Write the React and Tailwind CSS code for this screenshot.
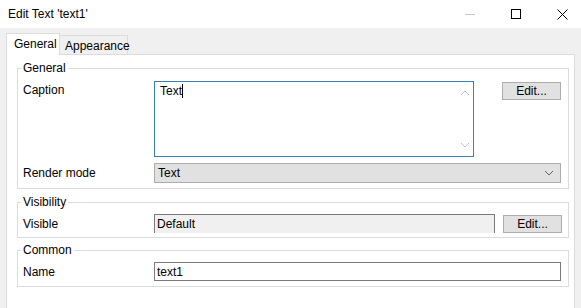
import React from 'react'

function Chevron({ dir = 'down', className = '' }) {
  const d = dir === 'up' ? 'M1 5 L5 1 L9 5' : 'M1 1 L5 5 L9 1'
  return (
    <svg width="10" height="6" viewBox="0 0 10 6" className={className}>
      <path d={d} fill="none" stroke="currentColor" strokeWidth="1" />
    </svg>
  )
}

function EditButton() {
  return (
    <button className="w-[59px] h-[18px] bg-[#e1e1e1] border border-[#adadad] text-[12px] leading-none flex items-center justify-center">
      Edit...
    </button>
  )
}

function Group({ title, children, className = '' }) {
  return (
    <fieldset className={`w-[552px] ml-[10px] border border-[#dcdcdc] pl-[5px] pr-[6px] ${className}`}>
      <legend className="px-[2px] -ml-[2px] leading-[14px]">{title}</legend>
      {children}
    </fieldset>
  )
}

export default function App() {
  return (
    <div
      className="w-[581px] h-[308px] bg-[#f0f0f0] overflow-hidden flex flex-col text-[12px] text-black"
      style={{ fontFamily: '"Liberation Sans", Arial, sans-serif' }}
    >
      {/* title bar */}
      <div className="h-[28px] bg-white flex items-center shrink-0">
        <span className="pl-[8px] leading-none">Edit Text 'text1'</span>
        <div className="ml-auto -mr-[4px] flex h-full">
          <div className="w-[46px] flex items-center justify-center">
            <div className="w-[10px] h-px bg-[#c8c8c8]" />
          </div>
          <div className="w-[46px] flex items-center justify-center">
            <div className="w-[10px] h-[10px] border border-black" />
          </div>
          <div className="w-[46px] flex items-center justify-center">
            <svg width="11" height="11" viewBox="0 0 11 11">
              <path d="M0.5 0.5 L10.5 10.5 M10.5 0.5 L0.5 10.5" stroke="black" strokeWidth="1" />
            </svg>
          </div>
        </div>
      </div>

      {/* tabs */}
      <div className="h-[26px] flex items-end pl-[6px] shrink-0">
        <div className="relative z-10 -mb-px h-[22px] w-[54px] bg-white border border-b-0 border-[#dcdcdc] pl-[7px] pt-[3px] leading-[14px]">
          General
        </div>
        <div className="h-[19px] w-[68px] bg-[#f0f0f0] border border-l-0 border-b-0 border-[#dcdcdc] pl-[5px] pt-[3px] leading-[14px]">
          Appearance
        </div>
      </div>

      {/* panel */}
      <div className="flex-1 ml-[6px] w-[569px] bg-white border border-b-0 border-[#dcdcdc] pt-[6px]">
        <Group title="General" className="pb-[5px]">
          <div className="flex items-start pt-[6px]">
            <div className="w-[131px] pt-[2px] leading-[14px]">Caption</div>
            <div className="w-[320px] h-[76px] border border-[#3a7fb5] bg-white flex">
              <div className="flex-1 pl-[5px] pt-[2px] leading-[14px] flex items-start">
                <span>Text</span>
                <span className="w-px h-[14px] bg-black" />
              </div>
              <div className="w-[17px] flex flex-col items-center justify-between py-[8px] text-[#c0c0c0]">
                <Chevron dir="up" />
                <Chevron dir="down" />
              </div>
            </div>
            <div className="ml-[28px] pt-px">
              <EditButton />
            </div>
          </div>
          <div className="flex items-center pt-[6px]">
            <div className="w-[131px] leading-[14px]">Render mode</div>
            <div className="w-[407px] h-[20px] bg-[#e1e1e1] border border-[#adadad] flex items-center pl-[3px] pr-[6px]">
              <span className="leading-none">Text</span>
              <Chevron className="ml-auto text-[#606060]" />
            </div>
          </div>
        </Group>

        <Group title="Visibility" className="mt-[6px] pb-[4px]">
          <div className="flex items-center pt-[5px]">
            <div className="w-[131px] leading-[14px]">Visible</div>
            <div className="w-[341px] h-[19px] bg-[#f0f0f0] border border-b-0 border-[#7a7a7a] pl-[2px] flex items-center">
              <span className="leading-none">Default</span>
            </div>
            <div className="ml-[8px]">
              <EditButton />
            </div>
          </div>
        </Group>

        <Group title="Common" className="mt-[5px] pb-[5px]">
          <div className="flex items-center pt-[5px]">
            <div className="w-[131px] leading-[14px]">Name</div>
            <div className="w-[407px] h-[19px] bg-white border border-[#7a7a7a] pl-[2px] flex items-center">
              <span className="leading-none">text1</span>
            </div>
          </div>
        </Group>
      </div>
    </div>
  )
}
